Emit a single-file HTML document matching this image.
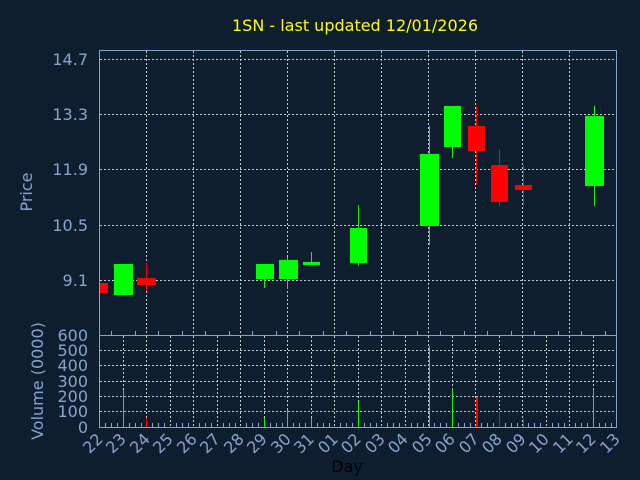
<!DOCTYPE html><html><head><style>body{margin:0;background:#0f1e2f;}svg{display:block}text{font-family:"DejaVu Sans","Liberation Sans",sans-serif;}</style></head><body>
<svg width="640" height="480" viewBox="0 0 640 480" xmlns="http://www.w3.org/2000/svg">
<rect width="640" height="480" fill="#0f1e2f"/>
<text x="355" y="31" fill="#ffff00" font-size="16" text-anchor="middle">1SN - last updated 12/01/2026</text>
<g stroke="#c8c8c8" stroke-dasharray="2,2" stroke-width="1">
<path d="M100 59.5H616M100 114.5H616M100 169.5H616M100 225.5H616M100 280.5H616"/>
<path d="M146.5 51V335M193.5 51V335M240.5 51V335M287.5 51V335M334.5 51V335M381.5 51V335M428.5 51V335M475.5 51V335M522.5 51V335M569.5 51V335"/>
<path d="M100 350.5H616M100 365.5H616M100 381.5H616M100 396.5H616M100 411.5H616"/>
<path d="M123.5 336V427M146.5 336V427M170.5 336V427M193.5 336V427M217.5 336V427M240.5 336V427M264.5 336V427M287.5 336V427M311.5 336V427M334.5 336V427M358.5 336V427M381.5 336V427M405.5 336V427M428.5 336V427M452.5 336V427M475.5 336V427M499.5 336V427M522.5 336V427M546.5 336V427M569.5 336V427M593.5 336V427"/>
</g>
<g stroke="#85a5d0" fill="none" stroke-width="1">
<rect x="99.5" y="50.5" width="517" height="285"/>
<rect x="99.5" y="335.5" width="517" height="92"/>
<path d="M111.5 335V331M135.5 335V331M158.5 335V331M182.5 335V331M205.5 335V331M229.5 335V331M252.5 335V331M276.5 335V331M299.5 335V331M323.5 335V331M346.5 335V331M370.5 335V331M393.5 335V331M417.5 335V331M440.5 335V331M464.5 335V331M487.5 335V331M511.5 335V331M534.5 335V331M558.5 335V331M581.5 335V331M605.5 335V331"/>
<path d="M105.5 427V423M111.5 427V423M117.5 427V423M129.5 427V423M135.5 427V423M141.5 427V423M152.5 427V423M158.5 427V423M164.5 427V423M176.5 427V423M182.5 427V423M188.5 427V423M199.5 427V423M205.5 427V423M211.5 427V423M223.5 427V423M229.5 427V423M235.5 427V423M246.5 427V423M252.5 427V423M258.5 427V423M270.5 427V423M276.5 427V423M282.5 427V423M293.5 427V423M299.5 427V423M305.5 427V423M317.5 427V423M323.5 427V423M329.5 427V423M340.5 427V423M346.5 427V423M352.5 427V423M364.5 427V423M370.5 427V423M376.5 427V423M387.5 427V423M393.5 427V423M399.5 427V423M411.5 427V423M417.5 427V423M423.5 427V423M434.5 427V423M440.5 427V423M446.5 427V423M458.5 427V423M464.5 427V423M470.5 427V423M481.5 427V423M487.5 427V423M493.5 427V423M505.5 427V423M511.5 427V423M517.5 427V423M528.5 427V423M534.5 427V423M540.5 427V423M552.5 427V423M558.5 427V423M564.5 427V423M575.5 427V423M581.5 427V423M587.5 427V423M599.5 427V423M605.5 427V423M611.5 427V423"/>
</g>
<g font-size="16" fill="#85a5d0" text-anchor="end">
<text x="88" y="65">14.7</text><text x="88" y="120">13.3</text><text x="88" y="175">11.9</text><text x="88" y="231">10.5</text><text x="88" y="286">9.1</text>
<text x="88" y="341">600</text><text x="88" y="356">500</text><text x="88" y="371">400</text><text x="88" y="387">300</text><text x="88" y="402">200</text><text x="88" y="417">100</text><text x="88" y="433">0</text>
</g>
<text transform="translate(32,192) rotate(-90)" fill="#85a5d0" font-size="16" text-anchor="middle">Price</text>
<text transform="translate(43,381) rotate(-90)" fill="#85a5d0" font-size="16" text-anchor="middle">Volume (0000)</text>
<g font-size="16" fill="#85a5d0" text-anchor="end">
<text transform="translate(104,440) rotate(-45)">22</text><text transform="translate(127,440) rotate(-45)">23</text><text transform="translate(151,440) rotate(-45)">24</text><text transform="translate(174,440) rotate(-45)">25</text><text transform="translate(198,440) rotate(-45)">26</text><text transform="translate(221,440) rotate(-45)">27</text><text transform="translate(245,440) rotate(-45)">28</text><text transform="translate(268,440) rotate(-45)">29</text><text transform="translate(292,440) rotate(-45)">30</text><text transform="translate(315,440) rotate(-45)">31</text><text transform="translate(339,440) rotate(-45)">01</text><text transform="translate(362,440) rotate(-45)">02</text><text transform="translate(386,440) rotate(-45)">03</text><text transform="translate(409,440) rotate(-45)">04</text><text transform="translate(433,440) rotate(-45)">05</text><text transform="translate(456,440) rotate(-45)">06</text><text transform="translate(480,440) rotate(-45)">07</text><text transform="translate(503,440) rotate(-45)">08</text><text transform="translate(527,440) rotate(-45)">09</text><text transform="translate(550,440) rotate(-45)">10</text><text transform="translate(574,440) rotate(-45)">11</text><text transform="translate(597,440) rotate(-45)">12</text><text transform="translate(621,440) rotate(-45)">13</text>
</g>
<text x="347" y="472" fill="#000" font-size="16" text-anchor="middle">Day</text>
<g fill="#00ff00">
<rect x="114" y="264" width="19" height="31"/>
<rect x="264" y="279" width="1" height="9"/><rect x="256" y="264" width="18" height="15"/>
<rect x="287" y="257" width="1" height="32"/><rect x="279" y="260" width="19" height="19"/>
<rect x="311" y="252" width="1" height="13"/><rect x="303" y="262" width="17" height="3"/>
<rect x="358" y="205" width="1" height="61"/><rect x="350" y="228" width="17" height="35"/>
<rect x="429" y="126" width="1" height="119"/><rect x="420" y="154" width="19" height="72"/>
<rect x="452" y="147" width="1" height="11"/><rect x="444" y="106" width="17" height="41"/>
<rect x="594" y="106" width="1" height="100"/><rect x="585" y="116" width="19" height="70"/>
<rect x="123" y="390" width="1" height="37"/><rect x="264" y="418" width="1" height="9"/><rect x="287" y="410" width="1" height="17"/><rect x="311" y="418" width="1" height="9"/><rect x="358" y="402" width="1" height="25"/><rect x="429" y="346" width="1" height="81"/><rect x="452" y="389" width="1" height="38"/><rect x="593" y="389" width="1" height="38"/>
</g>
<g fill="#ff0000">
<rect x="100" y="283" width="8" height="10"/>
<rect x="146" y="263" width="1" height="28"/><rect x="137" y="278" width="19" height="7"/>
<rect x="476" y="106" width="1" height="79"/><rect x="468" y="126" width="17" height="25"/>
<rect x="499" y="149" width="1" height="57"/><rect x="491" y="165" width="17" height="37"/>
<rect x="523" y="165" width="1" height="41"/><rect x="515" y="185" width="17" height="5"/>
<rect x="146" y="418" width="1" height="9"/><rect x="476" y="397" width="2" height="30"/><rect x="499" y="412" width="1" height="15"/><rect x="523" y="419" width="1" height="8"/>
</g>
</svg>
</body></html>
